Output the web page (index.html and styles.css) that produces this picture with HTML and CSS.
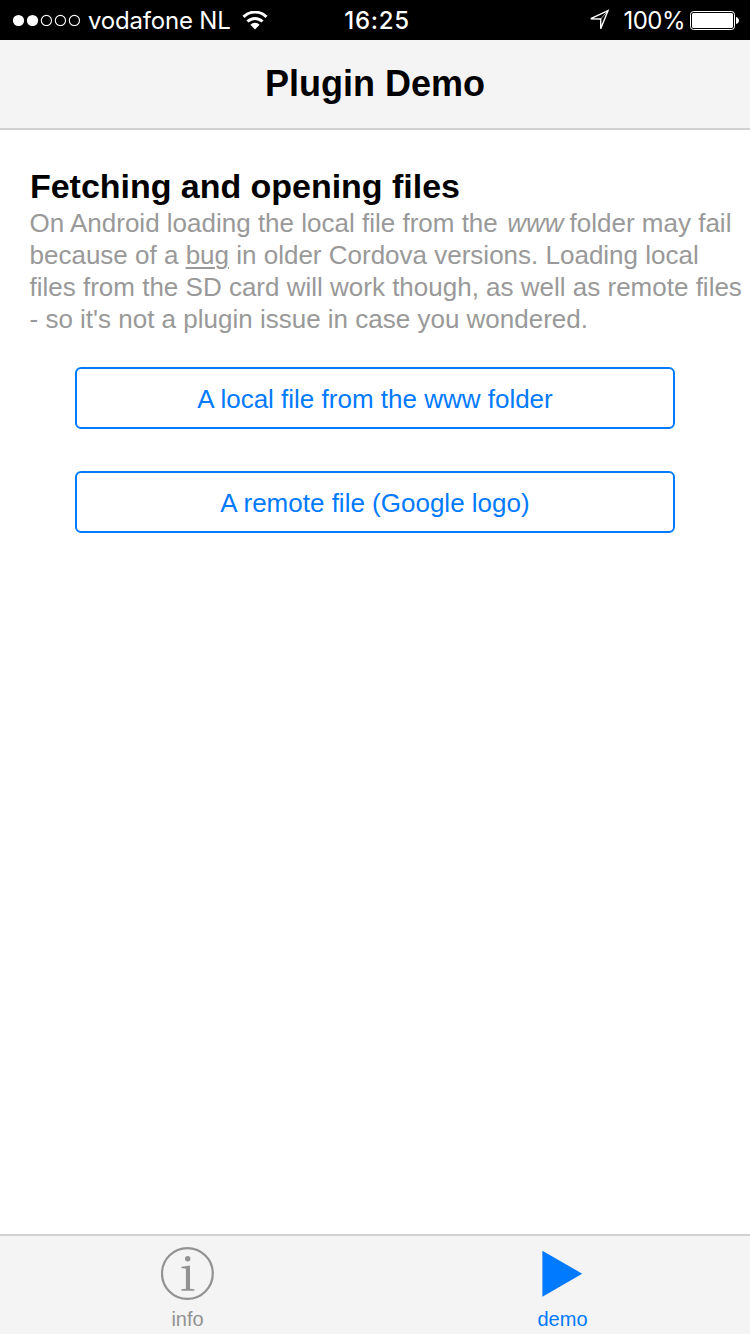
FILE: index.html
```html
<!DOCTYPE html>
<html lang="en">
<head>
<meta charset="utf-8">
<title>Plugin Demo</title>
<link rel="stylesheet" href="styles.css">
</head>
<body>
<div class="screen">
  <div class="status">
    <div class="status-left">
      <svg class="signal" width="68" height="12" viewBox="0.2 -0.5 68 12"><g fill="#fff"><circle cx="5.7" cy="6" r="5.6"/><circle cx="19.7" cy="6" r="5.6"/></g><g fill="none" stroke="#fff" stroke-width="1.1"><circle cx="33.6" cy="6" r="5.1"/><circle cx="47.6" cy="6" r="5.1"/><circle cx="61.6" cy="6" r="5.1"/></g></svg>
      <span class="carrier">vodafone NL</span>
      <svg class="wifi" width="26" height="19" viewBox="0 0.3 26 19"><g fill="none" stroke="#fff" stroke-width="3"><path d="M1.5 6.2a16.2 16.2 0 0 1 23 0"/><path d="M5.5 10.8a10.6 10.6 0 0 1 15 0"/></g><path fill="#fff" d="M13 18.7l-4.6-4.7a6.6 6.6 0 0 1 9.2 0z"/></svg>
    </div>
    <span class="clock">16:25</span>
    <div class="status-right">
      <svg class="arrow" width="22" height="22" viewBox="0 -0.5 22 22"><path d="M1.8 9.2L19 1.2L11.7 19.3V9.5Z" fill="none" stroke="#fff" stroke-width="1.4"/><path d="M11.7 9.5L19 1.2" stroke="#fff" stroke-width=".7"/></svg>
      <span class="percent">100%</span>
      <svg class="battery" width="49" height="20" viewBox="0 0 49 20"><rect x=".5" y="1.5" width="44" height="18" rx="3" fill="none" stroke="#fff"/><rect x="2" y="3" width="41" height="15" rx="1.5" fill="#fff"/><path d="M46 7c4 1 4 6 0 7z" fill="#fff"/></svg>
    </div>
  </div>
  <header class="navbar"><h1 class="title">Plugin Demo</h1></header>
  <main class="content">
    <h2 class="heading">Fetching and opening files</h2>
    <p class="note">
      <span class="line">On Android loading the local file from the <em class="folder">www</em> folder may fail</span>
      <span class="line">because of a <a class="link">bug</a> in older Cordova versions. Loading local</span>
      <span class="line">files from the SD card will work though, as well as remote files</span>
      <span class="line">- so it's not a plugin issue in case you wondered.</span>
    </p>
    <div class="actions">
      <button class="button">A local file from the www folder</button>
      <button class="button">A remote file (Google logo)</button>
    </div>
  </main>
  <nav class="tabs">
    <div class="tab">
      <svg class="tab-icon" width="54" height="54" viewBox="0.6 -0.5 54 54"><circle cx="27" cy="27" r="25.4" fill="none" stroke="#929292" stroke-width="2.2"/><circle cx="27.3" cy="12.2" r="2.7" fill="#929292"/><path d="M21 20.2L29.6 19.1V42.2L34 42.8V44.3H21V42.8L25.5 42.2V22.2L21 21.6Z" fill="#929292"/></svg>
      <span class="tab-label">info</span>
    </div>
    <div class="tab tab-active">
      <svg class="tab-icon" width="54" height="54" viewBox="0.8 -0.7 54 54"><path d="M7.2 4L47 27L7.2 50Z" fill="#007aff"/></svg>
      <span class="tab-label">demo</span>
    </div>
  </nav>
</div>
</body>
</html>
```
FILE: styles.css
```css
* { box-sizing: border-box; }
body { margin: 0; }
svg { display: block; flex: none; }
.screen {
  width: 750px; height: 1334px; display: flex; flex-direction: column;
  background: #fff; font-family: "Liberation Sans", Arial, sans-serif; overflow: hidden;
}
.status {
  height: 40px; flex: none; background: #000; color: #fff;
  display: grid; grid-template-columns: 1fr auto 1fr; align-items: center;
  padding: 0 11px 0 13px; font-family: Inter, sans-serif; font-size: 24px; line-height: 40px;
}
.status-left, .status-right { display: flex; align-items: center; }
.status-right { justify-content: flex-end; }
.carrier { margin-left: 7px; padding-top: 2px; font-size: 24px; line-height: 38px; letter-spacing: -.2px; }
.wifi { margin-left: 11px; }
.clock { padding: 2px 0 0 2px; line-height: 38px; font-weight: 500; letter-spacing: .7px; }
.arrow { margin-right: 12px; }
.percent { padding-top: 2px; line-height: 38px; letter-spacing: -.5px; margin-right: 5px; }
.navbar {
  height: 90px; flex: none; background: #f4f4f4; border-bottom: 2px solid #d2d2d2;
  display: flex; align-items: center; justify-content: center;
}
.title { margin: 0; font-size: 36px; line-height: 40px; letter-spacing: 0; }
.content { flex: 1; padding: 36px 0 0 30px; }
.heading { margin: 0; font-size: 34px; line-height: 40px; letter-spacing: -.03px; white-space: nowrap; }
.note { margin: 1px 0 0; font-size: 26px; line-height: 32px; color: #999; }
.line { display: block; margin-left: -.5px; white-space: nowrap; }
.folder { padding-left: 2.2px; margin-right: -1.2px; }
.link { text-decoration: underline; text-decoration-thickness: 1.5px; text-underline-offset: 3px; }
.actions { display: flex; flex-direction: column; gap: 42px; margin: 32px 75px 0 45px; }
.button {
  height: 62px; padding: 1px 0 0; border: 2px solid #007aff; border-radius: 6px; background: #fff;
  color: #007aff; font: 26px/32px "Liberation Sans", Arial, sans-serif;
}
.tabs {
  height: 100px; flex: none; display: grid; grid-template-columns: 1fr 1fr;
  background: #f4f4f4; border-top: 2px solid #d2d2d2;
}
.tab { display: flex; flex-direction: column; align-items: center; padding-top: 10px; color: #929292; }
.tab-active { color: #007aff; }
.tab-label { margin-top: 7px; font-size: 20px; line-height: 24px; }
```
